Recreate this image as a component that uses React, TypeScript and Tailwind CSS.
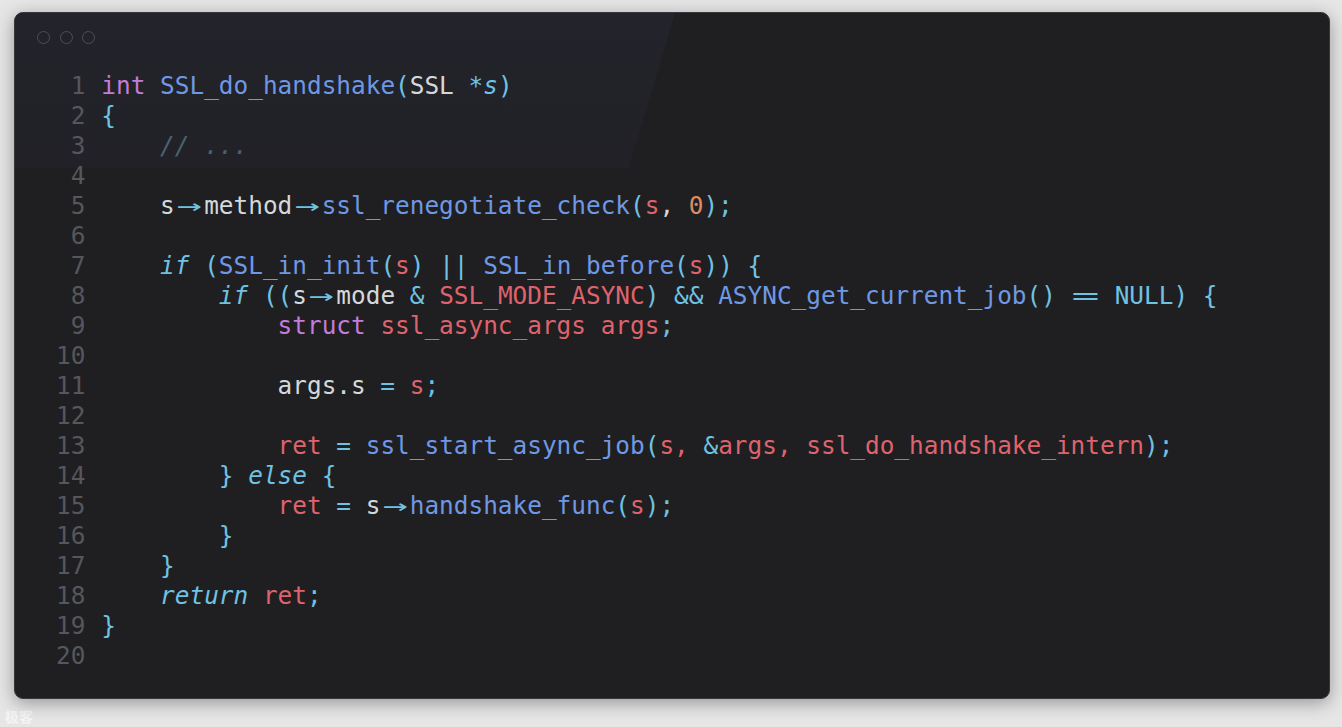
import React from 'react';

const P = 'text-[#c37cd8]';
const B = 'text-[#6f98e4]';
const C = 'text-[#6fc2e3]';
const W = 'text-[#d5d8da]';
const R = 'text-[#df636d]';
const O = 'text-[#df8a5f]';
const CI = 'text-[#6fc2e3] italic';
const CM = 'text-[#4a626e] italic';

type Tok = [string, string];

const AR: Tok = ['->', 'arrow'];
const EQ: Tok = ['==', 'eq'];

// one entry per line, tokens are [text, class]
const lines: Tok[][] = [
  [['int', P], [' ', W], ['SSL_do_handshake', B], ['(', C], ['SSL', W], [' ', W], ['*', C], ['s', CI], [')', C]],
  [['{', C]],
  [['    ', W], ['// ...', CM]],
  [],
  [['    ', W], ['s', W], AR, ['method', W], AR, ['ssl_renegotiate_check', B], ['(', C], ['s', R], [', ', W], ['0', O], [');', C]],
  [],
  [
    ['    ', W], ['if', CI], [' (', C], ['SSL_in_init', B], ['(', C], ['s', R], [')', C], [' || ', C],
    ['SSL_in_before', B], ['(', C], ['s', R], [')) {', C],
  ],
  [
    ['        ', W], ['if', CI], [' ((', C], ['s', W], AR, ['mode', W], [' & ', C], ['SSL_MODE_ASYNC', R], [')', C],
    [' && ', C], ['ASYNC_get_current_job', B], ['() ', C], EQ, [' NULL) {', C],
  ],
  [['            ', W], ['struct', P], [' ', W], ['ssl_async_args', R], [' ', W], ['args', R], [';', C]],
  [],
  [['            ', W], ['args.s', W], [' = ', C], ['s', R], [';', C]],
  [],
  [
    ['            ', W], ['ret', R], [' = ', C], ['ssl_start_async_job', B], ['(', C], ['s, ', R], ['&', C],
    ['args, ', R], ['ssl_do_handshake_intern', R], [');', C],
  ],
  [['        ', W], ['}', C], [' ', W], ['else', CI], [' {', C]],
  [['            ', W], ['ret', R], [' = ', C], ['s', W], AR, ['handshake_func', B], ['(', C], ['s', R], [');', C]],
  [['        }', C]],
  [['    }', C]],
  [['    ', W], ['return', CI], [' ', W], ['ret', R], [';', C]],
  [['}', C]],
  [],
];

function Token({ t }: { t: Tok }) {
  if (t[1] === 'arrow') {
    return (
      <span className={`inline-block w-[2ch] text-center ${C}`}>
        <span className="inline-block scale-x-[1.7]">→</span>
      </span>
    );
  }
  if (t[1] === 'eq') {
    return (
      <span className={`inline-block w-[2ch] text-center ${C}`}>
        <span className="inline-block scale-x-[1.9]">=</span>
      </span>
    );
  }
  return <span className={t[1]}>{t[0]}</span>;
}

export default function App() {
  return (
    <div className="w-full h-[727px] bg-[#e6e6e6] pt-[12px] pl-[14px] overflow-hidden">
      <div className="relative w-[1316px] h-[687px] rounded-[9px] bg-[#1f1f21] border border-[#38383c] shadow-[0_4px_18px_rgba(0,0,0,0.35)] overflow-hidden">
        <div className="absolute left-0 top-0 w-[660px] h-[155px] bg-gradient-to-b from-[#23232b] to-[#212127] [clip-path:polygon(0_0,100%_0,93%_100%,0_100%)]" />

        <div className="relative flex gap-[9.5px] pt-[17.5px] pl-[22px]">
          <span className="w-[13px] h-[13px] rounded-full border-[1.5px] border-[#4e4e54]" />
          <span className="w-[13px] h-[13px] rounded-full border-[1.5px] border-[#4e4e54]" />
          <span className="w-[13px] h-[13px] rounded-full border-[1.5px] border-[#4e4e54]" />
        </div>

        <div className="relative mt-[27px] pl-[41px] font-['DejaVu_Sans_Mono','Liberation_Mono',monospace] text-[24.4px] leading-[30px]">
          {lines.map((toks, i) => (
            <div key={i} className="flex h-[30px] items-center whitespace-pre">
              <span className="w-[2ch] text-right text-[#56565d] mr-[16px]">{i + 1}</span>
              <span>
                {toks.map((t, j) => (
                  <Token key={j} t={t} />
                ))}
              </span>
            </div>
          ))}
        </div>
      </div>
      <div className="mt-[9px] -ml-[9px] text-[14px] font-bold leading-[16px] text-white/60 font-['Noto_Sans_CJK_SC',sans-serif]">极客</div>
    </div>
  );
}
